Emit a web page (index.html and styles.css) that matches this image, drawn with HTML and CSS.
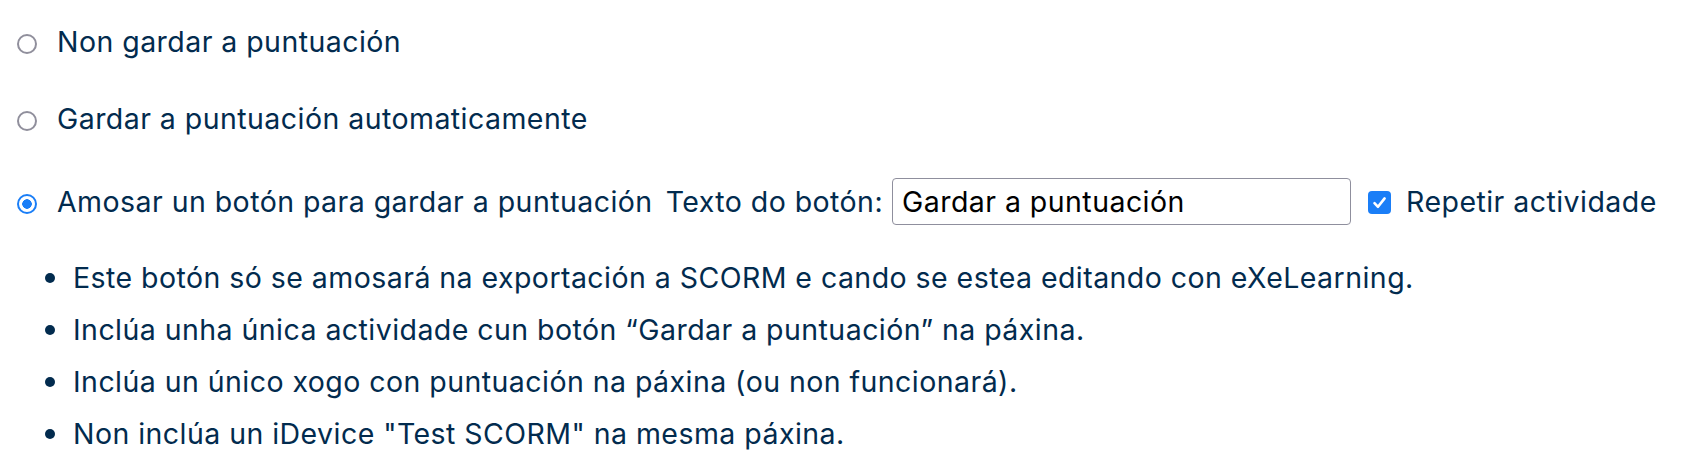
FILE: index.html
```html
<!DOCTYPE html>
<html lang="gl">
<head>
<meta charset="utf-8">
<title>Puntuación</title>
<link rel="stylesheet" href="styles.css">
</head>
<body>
<div class="panel">
  <div class="options">
    <label class="opt">
      <span class="radio" role="radio" aria-checked="false"></span>
      <span>Non gardar a puntuación</span>
    </label>
    <label class="opt">
      <span class="radio" role="radio" aria-checked="false"></span>
      <span>Gardar a puntuación automaticamente</span>
    </label>
    <div class="opt opt-wide">
      <label class="opt-main">
        <span class="radio is-checked" role="radio" aria-checked="true"></span>
        <span>Amosar un botón para gardar a puntuación</span>
      </label>
      <label class="field">
        <span>Texto do botón:</span>
        <input type="text" class="text-input" value="Gardar a puntuación">
      </label>
      <label class="check">
        <span class="checkbox" role="checkbox" aria-checked="true">
          <svg viewBox="0 0 23 23" width="23" height="23"><path d="M6.5 12.2 L10 15.8 L16.6 7.4" fill="none" stroke="#fff" stroke-width="2.6" stroke-linecap="round" stroke-linejoin="round"/></svg>
        </span>
        <span>Repetir actividade</span>
      </label>
    </div>
  </div>
  <ul class="notes">
    <li>Este botón só se amosará na exportación a SCORM e cando se estea editando con eXeLearning.</li>
    <li>Inclúa unha única actividade cun botón “Gardar a puntuación” na páxina.</li>
    <li>Inclúa un único xogo con puntuación na páxina (ou non funcionará).</li>
    <li>Non inclúa un iDevice "Test SCORM" na mesma páxina.</li>
  </ul>
</div>
</body>
</html>
```
FILE: styles.css
```css
html, body {
  margin: 0;
  padding: 0;
  background: #ffffff;
}

body {
  font-family: Inter, "Noto Sans", "Liberation Sans", sans-serif;
  font-size: 28.5px;
  letter-spacing: 0.45px;
  color: #022b4e;
}

.panel {
  padding: 25px 0 0 0;
}

.options {
  display: flex;
  flex-direction: column;
  gap: 42.5px;
}

.opt {
  display: flex;
  align-items: center;
  line-height: 34px;
  height: 34px;
}

.opt-wide {
  height: 47px;
}

.opt-main {
  display: flex;
  align-items: center;
}

.radio {
  display: block;
  width: 20px;
  height: 20px;
  margin: 4px 20px 0 17px;
  border: 2.5px solid #908f9c;
  border-radius: 50%;
  box-sizing: border-box;
  background: #fff;
  flex: none;
}

.radio.is-checked {
  border: 2.5px solid #1a7ef7;
  background: radial-gradient(circle, #1a7ef7 0 4.5px, #fff 5px 100%);
}

.field {
  display: flex;
  align-items: center;
  margin-left: 13px;
}

.text-input {
  margin-left: 9px;
  width: 459px;
  height: 47px;
  box-sizing: border-box;
  border: 1.5px solid #8f8f9d;
  border-radius: 4px;
  padding: 0 9px;
  font-family: Inter, "Noto Sans", "Liberation Sans", sans-serif;
  font-size: 28.5px;
  letter-spacing: 0.45px;
  color: #000;
  background: #fff;
}

.check {
  display: flex;
  align-items: center;
  margin-left: 17px;
}

.checkbox {
  display: block;
  width: 23px;
  height: 23px;
  margin: 2px 15px 0 0;
  border-radius: 4px;
  background: #1a7ef7;
  flex: none;
}

.checkbox svg {
  display: block;
}

.notes {
  margin: 27px 0 0 0;
  padding: 0 0 0 73px;
  list-style: none;
}

.notes li {
  line-height: 52px;
  position: relative;
}

.notes li::before {
  content: "";
  position: absolute;
  left: -28px;
  top: 21px;
  width: 10px;
  height: 10px;
  border-radius: 50%;
  background: #022b4e;
}
```
